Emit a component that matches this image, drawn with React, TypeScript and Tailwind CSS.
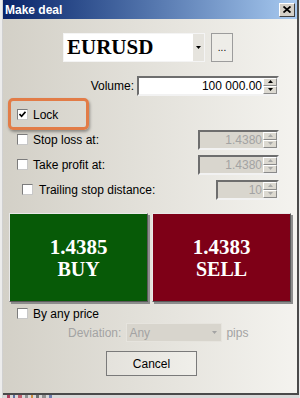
import React from 'react';

const sans = { fontFamily: '"Liberation Sans", Arial, sans-serif' };
const serif = { fontFamily: '"Liberation Serif", "Times New Roman", serif' };

function Check({ checked }: { checked?: boolean }) {
  return (
    <span className="w-[11px] h-[11px] shrink-0 bg-white border border-t-[#7c7c7c] border-l-[#7c7c7c] border-b-[#c8c8c8] border-r-[#c8c8c8] flex items-center justify-center">
      {checked && (
        <svg width="7" height="7" viewBox="0 0 7 7">
          <polyline points="0.5,3 2.6,5.3 6.5,0.8" fill="none" stroke="#000" strokeWidth="1.7" />
        </svg>
      )}
    </span>
  );
}

function Spinner({ disabled }: { disabled?: boolean }) {
  const c = disabled ? '#a8a8a8' : '#000';
  return (
    <div className="w-[14px] flex flex-col shrink-0">
      {[0, 1].map((i) => (
        <div
          key={i}
          className="flex-1 bg-[#dcd9d1] border border-t-white border-l-white border-b-[#8a8a8a] border-r-[#8a8a8a] flex items-center justify-center"
        >
          <svg width="5" height="3" viewBox="0 0 5 3">
            <polygon points={i === 0 ? '0,3 5,3 2.5,0' : '0,0 5,0 2.5,3'} fill={c} />
          </svg>
        </div>
      ))}
    </div>
  );
}

function NumField({ value, width, disabled }: { value: string; width: string; disabled?: boolean }) {
  return (
    <div
      className={`${width} h-[20px] flex border-2 border-t-[#6e6e6e] border-l-[#6e6e6e] border-b-[#f2f2f2] border-r-[#f2f2f2] ${
        disabled ? 'bg-[#d9d6ce]' : 'bg-white'
      }`}
    >
      <div
        className={`flex-1 text-right pr-[1px] leading-[16px] text-[12px] ${disabled ? 'text-[#a3a3a3]' : 'text-black'}`}
      >
        {value}
      </div>
      <Spinner disabled={disabled} />
    </div>
  );
}

function TradeButton({ price, label, bg }: { price: string; label: string; bg: string }) {
  return (
    <div
      className={`w-[139px] h-[89px] ${bg} border border-t-[#e8e8e8] border-l-[#e8e8e8] border-b-[#5a5a5a] border-r-[#5a5a5a] shadow-[2px_2px_0_#8c8c8c] flex flex-col items-center justify-center text-white font-bold`}
      style={serif}
    >
      <div className="text-[21px] leading-[22px]">{price}</div>
      <div className="text-[20px] leading-[22px]">{label}</div>
    </div>
  );
}

export default function App() {
  return (
    <div className="w-[300px] h-[398px] flex overflow-hidden bg-[#f0f0f0] text-black text-[12px]" style={sans}>
      {/* behind-window strip */}
      <div className="w-[3px] bg-[#ececec] border-r border-[#d0d0d0]" />

      <div className="w-[296px] flex flex-col">
        <div className="flex flex-1">
          <div className="w-[294px] flex flex-col">
            {/* title bar */}
            <div className="h-[19px] flex items-center bg-gradient-to-r from-[#0a246a] to-[#a8caf0] pl-[2px] pr-[2px]">
              <span className="text-white font-bold text-[12px] leading-none">Make deal</span>
              <div className="ml-auto w-[16px] h-[14px] bg-[#d4d0c8] border border-t-white border-l-white border-b-[#404040] border-r-[#404040] flex items-center justify-center">
                <svg width="8" height="7" viewBox="0 0 8 7">
                  <path d="M0.5 0.5 L7.5 6.5 M7.5 0.5 L0.5 6.5" stroke="#000" strokeWidth="1.8" />
                </svg>
              </div>
            </div>

            {/* body */}
            <div className="flex-1 relative flex flex-col bg-gradient-to-r from-[#d3d0c7] to-[#f4f3ef]">
              {/* symbol */}
              <div className="mt-[14px] h-[29px] flex pl-[60px] gap-[6px]">
                <div className="w-[142px] h-[29px] bg-white flex border border-[#f4f4f4]">
                  <div className="flex-1 pl-[3px] font-bold text-[21px] leading-[27px]" style={serif}>
                    EURUSD
                  </div>
                  <div className="w-[11px] bg-[#e6e4de] flex items-center justify-center">
                    <svg width="5" height="3" viewBox="0 0 5 3">
                      <polygon points="0,0 5,0 2.5,3" fill="#000" />
                    </svg>
                  </div>
                </div>
                <div className="w-[22px] h-[29px] border border-[#9c9c9c] bg-[#eeede8] flex items-end justify-center pb-[8px] text-[10px] leading-none">
                  ...
                </div>
              </div>

              {/* volume */}
              <div className="mt-[13px] h-[21px] flex items-center">
                <div className="w-[134px] text-right pr-[3px]">Volume:</div>
                <NumField value="100 000.00" width="w-[142px]" />
              </div>

              {/* lock */}
              <div className="mt-[6px] h-[25px] flex items-center pl-[14px] gap-[5px]">
                <Check checked />
                <span>Lock</span>
              </div>

              {/* stop loss */}
              <div className="h-[25px] flex items-center pl-[14px] pr-[18px] gap-[5px]">
                <Check />
                <span>Stop loss at:</span>
                <div className="ml-auto">
                  <NumField value="1.4380" width="w-[81px]" disabled />
                </div>
              </div>

              {/* take profit */}
              <div className="h-[25px] flex items-center pl-[14px] pr-[18px] gap-[5px]">
                <Check />
                <span>Take profit at:</span>
                <div className="ml-auto">
                  <NumField value="1.4380" width="w-[81px]" disabled />
                </div>
              </div>

              {/* trailing */}
              <div className="h-[25px] flex items-center pl-[19px] pr-[18px] gap-[6px]">
                <Check />
                <span>Trailing stop distance:</span>
                <div className="ml-auto">
                  <NumField value="10" width="w-[63px]" disabled />
                </div>
              </div>

              {/* buy / sell */}
              <div className="mt-[11px] flex pl-[6px] gap-[4px]">
                <TradeButton price="1.4385" label="BUY" bg="bg-[#075a07]" />
                <TradeButton price="1.4383" label="SELL" bg="bg-[#7e0017]" />
              </div>

              {/* by any price */}
              <div className="mt-[2px] h-[19px] flex items-center pl-[14px] gap-[5px]">
                <Check />
                <span>By any price</span>
              </div>

              {/* deviation */}
              <div className="h-[19px] flex items-center pl-[65px] text-[#a3a3a3]">
                <span>Deviation:</span>
                <div className="ml-[5px] w-[96px] h-[19px] bg-[#d8d5cd] border border-[#e6e4de] flex items-center">
                  <span className="flex-1 pl-[2px]">Any</span>
                  <svg width="5" height="3" viewBox="0 0 5 3" className="mr-[4px]">
                    <polygon points="0,0 5,0 2.5,3" fill="#a3a3a3" />
                  </svg>
                </div>
                <span className="ml-[4px]">pips</span>
              </div>

              {/* cancel */}
              <div className="mt-[9px] pl-[103px]">
                <div className="w-[91px] h-[25px] border border-[#7a7a7a] bg-gradient-to-r from-[#e4e2dc] to-[#f0efea] flex items-center justify-center">
                  Cancel
                </div>
              </div>

              {/* annotation highlight */}
              <div className="absolute left-[5px] top-[79px] w-[81px] h-[32px] rounded-[5px] border-[3px] border-[#e27c47] shadow-[1px_2px_3px_rgba(0,0,0,0.35)]" />
            </div>
          </div>
          {/* right frame */}
          <div className="w-[2px] bg-[#4a4a4a]" />
        </div>
        {/* bottom frame */}
        <div className="h-[2px] bg-[#4a4a4a]" />
        <div className="h-[3px] flex bg-[#d8d8d8] gap-[3px] pl-[4px]">
          <span className="w-[3px] bg-[#b04060]" />
          <span className="w-[2px] bg-[#6070a0]" />
          <span className="w-[4px] bg-[#c06070]" />
          <span className="w-[3px] bg-[#909090]" />
          <span className="w-[2px] bg-[#d09040]" />
          <span className="w-[3px] bg-[#707070]" />
          <span className="w-[4px] bg-[#909090]" />
          <span className="w-[3px] bg-[#7080b0]" />
        </div>
      </div>
      <div className="w-[1px] bg-[#e8e8e8]" />
    </div>
  );
}
